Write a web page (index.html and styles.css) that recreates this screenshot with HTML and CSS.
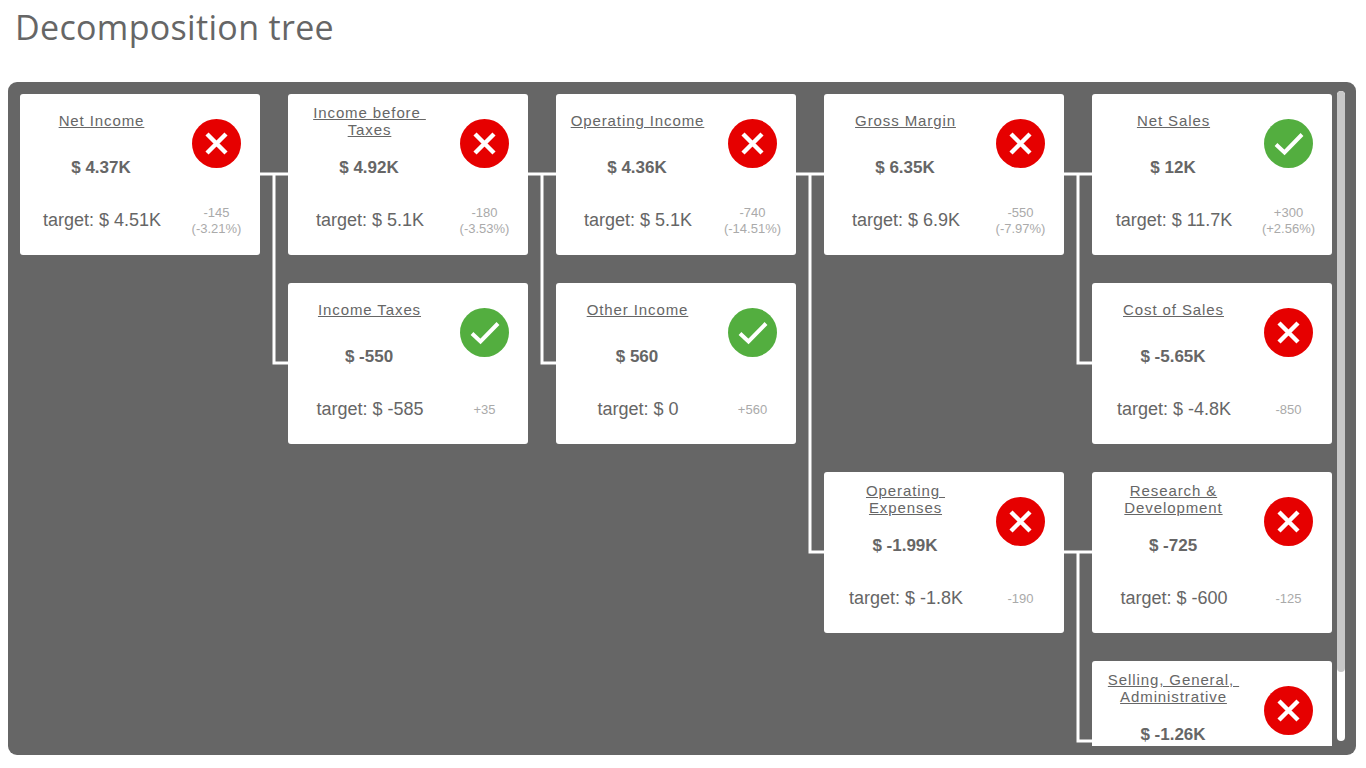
FILE: index.html
```html
<!DOCTYPE html>
<html lang="en">
<head>
<meta charset="utf-8">
<title>Decomposition tree</title>
<link rel="stylesheet" href="styles.css">
</head>
<body>
<h1 class="page-title">Decomposition tree</h1>
<main class="panel">
  <div class="viewport">
    <div class="tree">
      <svg class="links" width="1312" height="728" viewBox="0 0 1312 728" aria-hidden="true">
        <path d="M240 80H268M254 80V269H268M508 80H536M522 80V269H536M776 80H804M790 80V458H804M1044 80H1072M1058 80V269H1072M1044 458H1072M1058 458V647H1072"/>
      </svg>

      <article class="card c1 r1">
        <h2 class="name">Net Income</h2><p class="value">$ 4.37K</p>
        <svg class="status" viewBox="0 0 49 49"><use href="#bad"/></svg>
        <p class="target">target: $ 4.51K</p><p class="delta">-145<br>(-3.21%)</p>
      </article>

      <article class="card c2 r1">
        <h2 class="name">Income before&nbsp;<br>Taxes</h2><p class="value">$ 4.92K</p>
        <svg class="status" viewBox="0 0 49 49"><use href="#bad"/></svg>
        <p class="target">target: $ 5.1K</p><p class="delta">-180<br>(-3.53%)</p>
      </article>
      <article class="card c2 r2">
        <h2 class="name">Income Taxes</h2><p class="value">$ -550</p>
        <svg class="status" viewBox="0 0 49 49"><use href="#good"/></svg>
        <p class="target">target: $ -585</p><p class="delta">+35</p>
      </article>

      <article class="card c3 r1">
        <h2 class="name">Operating Income</h2><p class="value">$ 4.36K</p>
        <svg class="status" viewBox="0 0 49 49"><use href="#bad"/></svg>
        <p class="target">target: $ 5.1K</p><p class="delta">-740<br>(-14.51%)</p>
      </article>
      <article class="card c3 r2">
        <h2 class="name">Other Income</h2><p class="value">$ 560</p>
        <svg class="status" viewBox="0 0 49 49"><use href="#good"/></svg>
        <p class="target">target: $ 0</p><p class="delta">+560</p>
      </article>

      <article class="card c4 r1">
        <h2 class="name">Gross Margin</h2><p class="value">$ 6.35K</p>
        <svg class="status" viewBox="0 0 49 49"><use href="#bad"/></svg>
        <p class="target">target: $ 6.9K</p><p class="delta">-550<br>(-7.97%)</p>
      </article>
      <article class="card c4 r3">
        <h2 class="name">Operating&nbsp;<br>Expenses</h2><p class="value">$ -1.99K</p>
        <svg class="status" viewBox="0 0 49 49"><use href="#bad"/></svg>
        <p class="target">target: $ -1.8K</p><p class="delta">-190</p>
      </article>

      <article class="card c5 r1">
        <h2 class="name">Net Sales</h2><p class="value">$ 12K</p>
        <svg class="status" viewBox="0 0 49 49"><use href="#good"/></svg>
        <p class="target">target: $ 11.7K</p><p class="delta">+300<br>(+2.56%)</p>
      </article>
      <article class="card c5 r2">
        <h2 class="name">Cost of Sales</h2><p class="value">$ -5.65K</p>
        <svg class="status" viewBox="0 0 49 49"><use href="#bad"/></svg>
        <p class="target">target: $ -4.8K</p><p class="delta">-850</p>
      </article>
      <article class="card c5 r3">
        <h2 class="name">Research &amp;<br>Development</h2><p class="value">$ -725</p>
        <svg class="status" viewBox="0 0 49 49"><use href="#bad"/></svg>
        <p class="target">target: $ -600</p><p class="delta">-125</p>
      </article>
      <article class="card c5 r4">
        <h2 class="name">Selling, General,&nbsp;<br>Administrative</h2><p class="value">$ -1.26K</p>
        <svg class="status" viewBox="0 0 49 49"><use href="#bad"/></svg>
      </article>
    </div>
  </div>
  <div class="scrollbar"><div class="thumb"></div></div>
</main>

<svg class="defs" width="0" height="0" aria-hidden="true">
  <defs>
    <g id="bad">
      <circle cx="24.5" cy="24.5" r="24.5" fill="#e60000"/>
      <path d="M15 15L34 34M34 15L15 34" fill="none" stroke="#fff" stroke-width="4.4"/>
    </g>
    <g id="good">
      <circle cx="24.5" cy="24.5" r="24.5" fill="#53ae3f"/>
      <path d="M12 25.5L20.5 33.5L38 15.5" fill="none" stroke="#fff" stroke-width="4"/>
    </g>
  </defs>
</svg>
</body>
</html>
```

FILE: styles.css
```css
* { box-sizing: border-box; }

html, body {
  margin: 0;
  padding: 0;
  background: #fff;
}

body {
  width: 1366px;
  height: 768px;
  overflow: hidden;
  padding: 0 10px 0 8px;
  font-family: "Liberation Sans", Arial, sans-serif;
  color: #666;
}

.page-title {
  margin: 0;
  height: 82px;
  padding: 5px 0 0 7px;
  font-family: "Open Sans", "Noto Sans", sans-serif;
  font-weight: 400;
  font-size: 34px;
  line-height: 44px;
  letter-spacing: 0.33px;
  color: #666;
}

.panel {
  position: relative;
  width: 1348px;
  height: 673px;
  padding: 12px 0 9px 12px;
  background: #666;
  border-radius: 9px;
}

.viewport {
  width: 1312px;
  height: 652px;
  overflow: hidden;
}

.tree {
  position: relative;
  display: grid;
  grid-template-columns: repeat(5, 240px);
  grid-template-rows: repeat(4, 161px);
  gap: 28px;
}

.links {
  position: absolute;
  left: 0;
  top: 0;
}

.links path {
  fill: none;
  stroke: #fff;
  stroke-width: 3;
}

.card {
  position: relative;
  display: grid;
  grid-template-columns: 162px 68px;
  grid-template-rows: 54px 40px 64px;
  background: #fff;
  border-radius: 3px;
}

.c1 { grid-column: 1; }
.c2 { grid-column: 2; }
.c3 { grid-column: 3; }
.c4 { grid-column: 4; }
.c5 { grid-column: 5; }
.r1 { grid-row: 1; }
.r2 { grid-row: 2; }
.r3 { grid-row: 3; }
.r4 { grid-row: 4; }

.name {
  grid-column: 1;
  grid-row: 1;
  align-self: center;
  margin: 0;
  padding-left: 1px;
  font-size: 15px;
  font-weight: 400;
  line-height: 17.5px;
  letter-spacing: 0.9px;
  text-align: center;
  text-decoration: underline;
  color: #666;
}

.value {
  grid-column: 1;
  grid-row: 2;
  align-self: center;
  margin: 0;
  font-size: 17px;
  font-weight: 700;
  line-height: 20px;
  text-align: center;
}

.status {
  grid-column: 2;
  grid-row: 1 / 3;
  justify-self: center;
  width: 49px;
  height: 49px;
  margin-top: 25px;
}

.target {
  grid-column: 1;
  grid-row: 3;
  align-self: center;
  margin: 0;
  padding-left: 2px;
  font-size: 18px;
  line-height: 22px;
  text-align: center;
}

.delta {
  grid-column: 2;
  grid-row: 3;
  align-self: center;
  margin: 0;
  padding: 2px 0 0 1px;
  font-size: 13px;
  line-height: 16px;
  text-align: center;
  color: #aaa;
}

.scrollbar {
  position: absolute;
  right: 11px;
  top: 9px;
  width: 8px;
  height: 650px;
  background: #fff;
  border-radius: 4px;
  overflow: hidden;
}

.thumb {
  height: 581px;
  background: #c8c8c8;
  border-radius: 4px;
}

.defs {
  position: absolute;
}
```
